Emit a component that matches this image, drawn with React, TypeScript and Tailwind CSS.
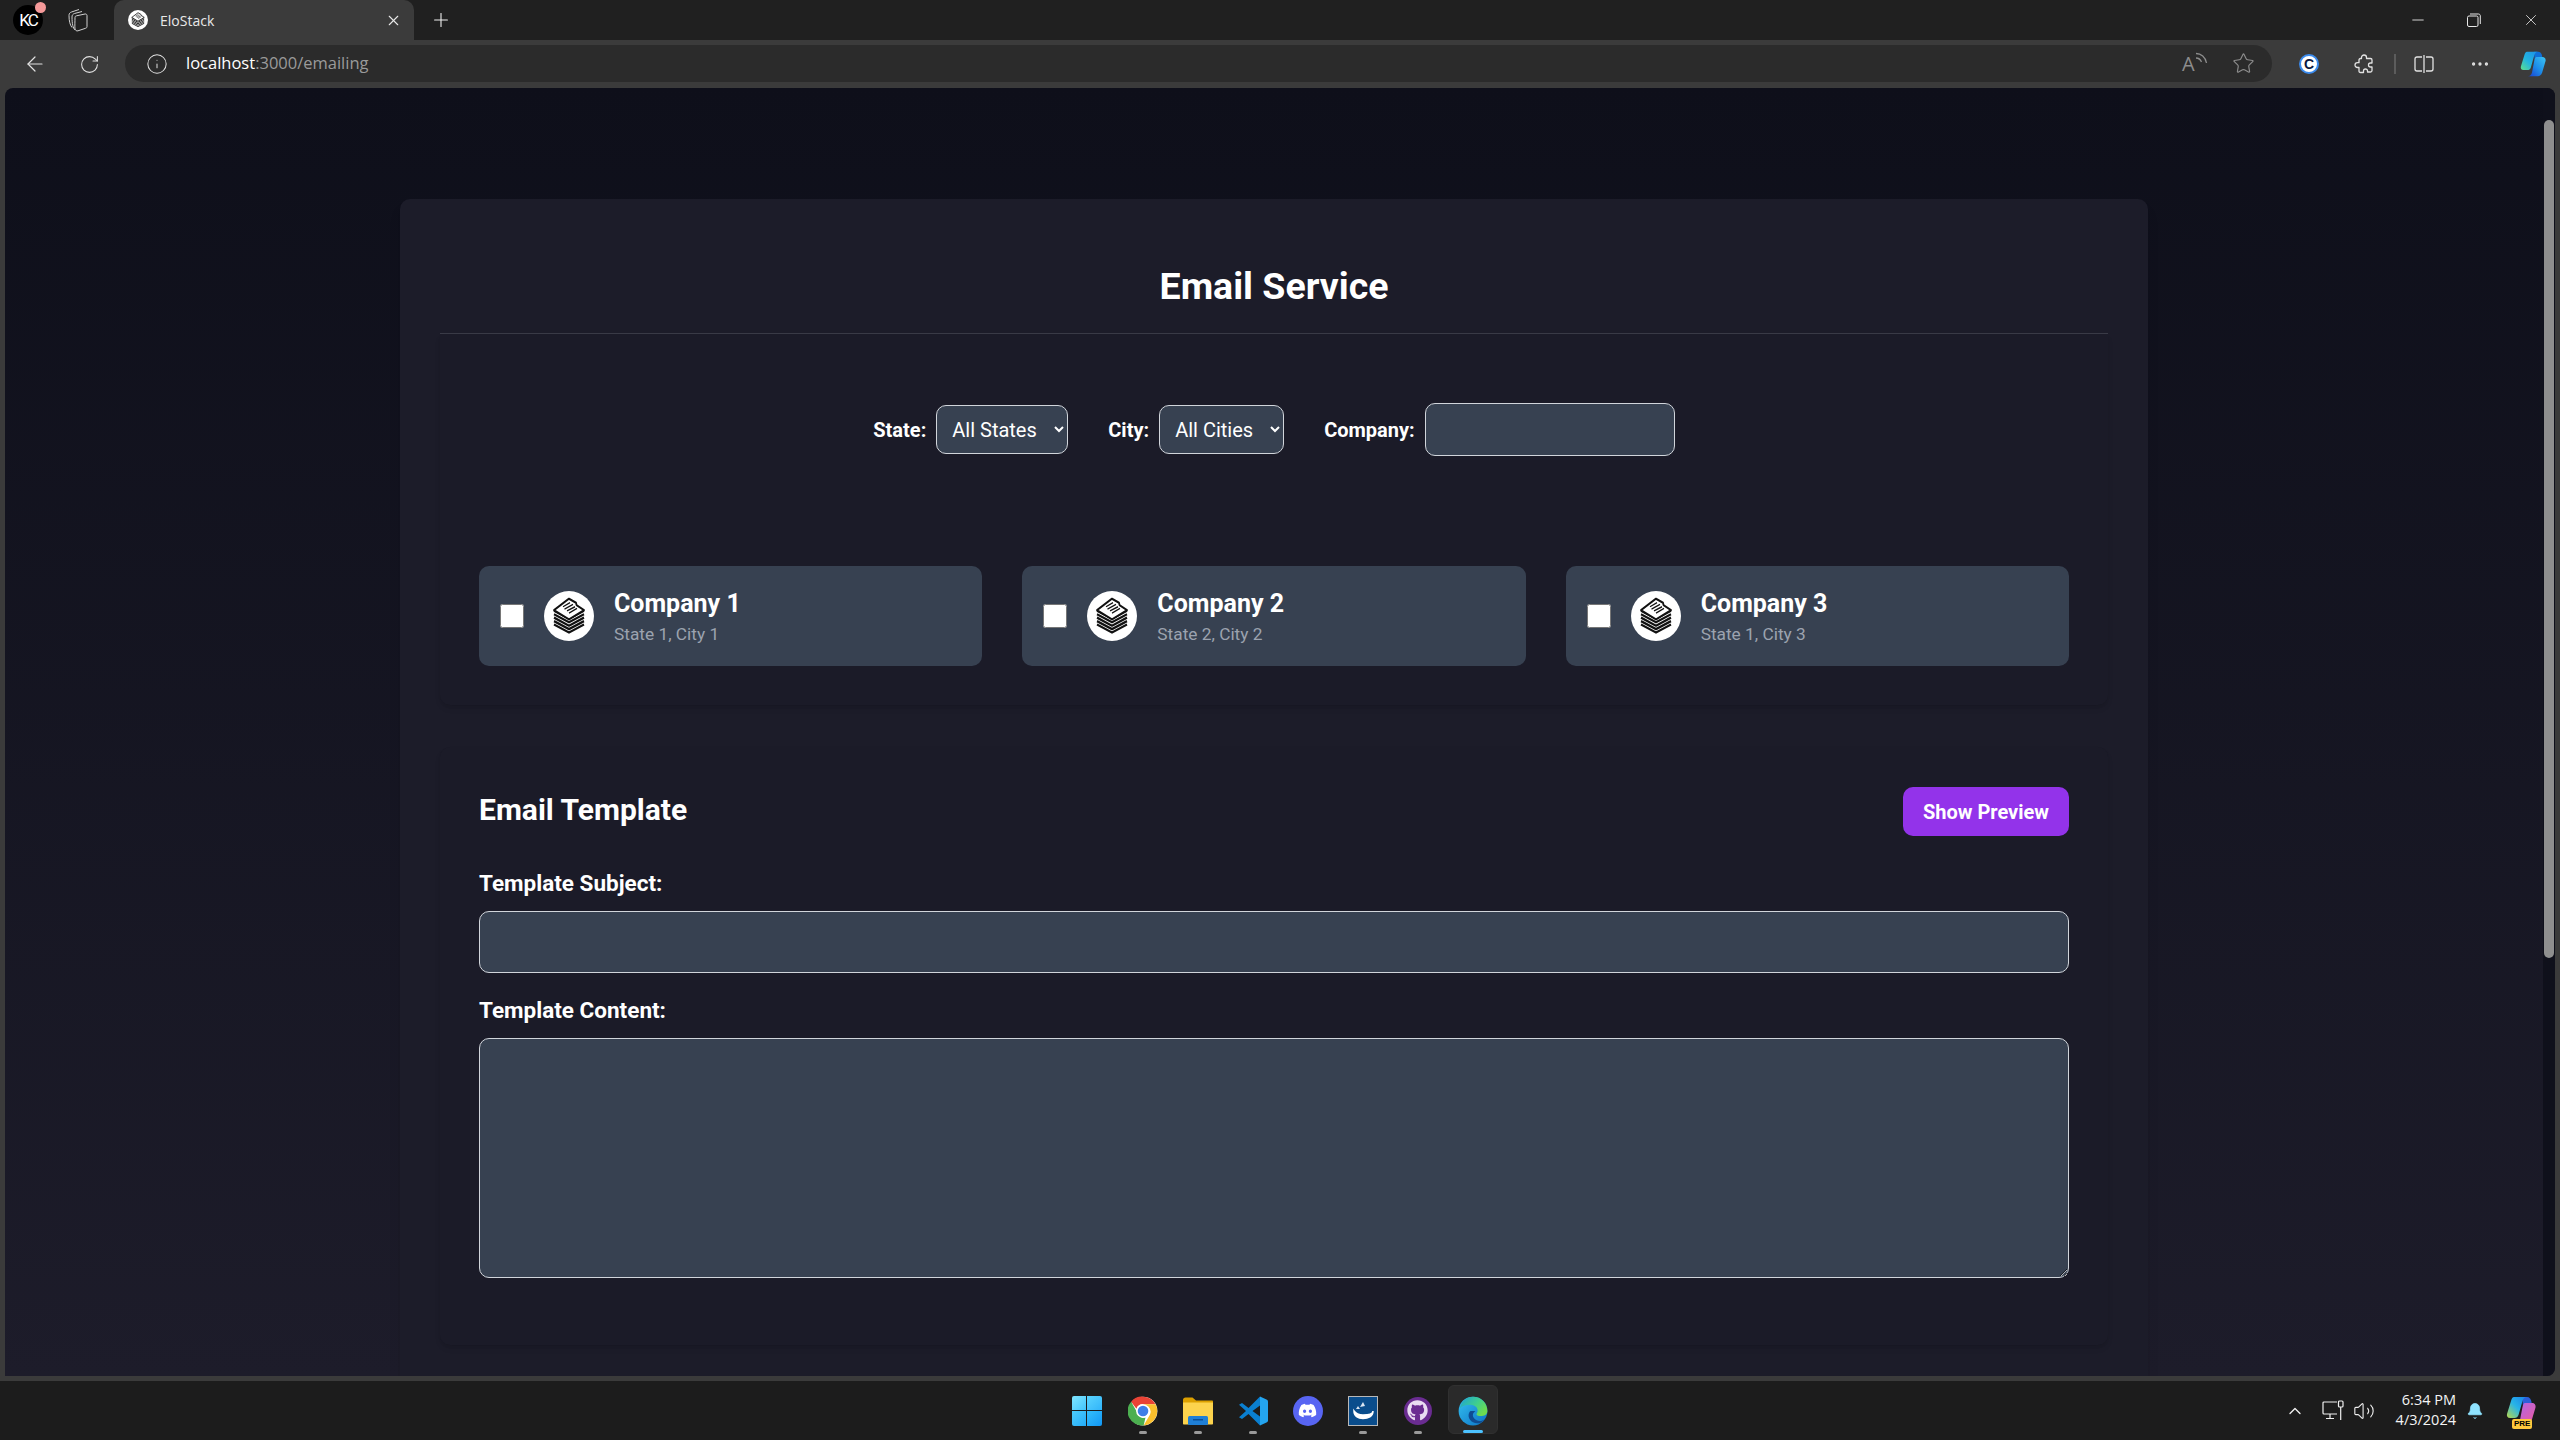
import React from "react";
import { ArrowLeft, RotateCw, Info, X, Plus, Star, Minus, ChevronUp, Volume2, Bell, MoreHorizontal } from "lucide-react";
import { FaDiscord, FaGithub } from "react-icons/fa";

const StackLogo = ({ w = 34, h = 39 }: { w?: number; h?: number }) => (
  <svg width={w} height={h} viewBox="0 0 34 34" preserveAspectRatio="none" fill="none" stroke="#111" strokeLinejoin="round">
    {[27, 24, 21, 18, 15].map((y) => (
      <path key={y} d={`M2 ${y - 3}L17 ${y + 4}L32 ${y - 3}`} strokeWidth="2" />
    ))}
    <path d="M17 1.5L24 5L24.5 7L32 11.5L17 19.5L2 11.5Z" fill="#fff" strokeWidth="1.8" />
    <path d="M11 8.5L18 5M12.5 10.5L21 6.5M15 12L23 8.5M17 14L25 10" strokeWidth="1.2" />
  </svg>
);

const Collections = () => (
  <svg width="22" height="24" viewBox="0 0 22 24" fill="none" stroke="#d0d0d0" strokeWidth="1">
    <path d="M9 9.500C9 8.500 9.500 8 10.500 7.800L19 6C20.200 5.800 21 6.500 21 7.500V18.500C21 19.500 20.500 20 19.500 20.300L12 22.800C10.500 23.300 9.500 22.500 9 21C8.700 19 9 13 9 9.500Z" />
    <path d="M9 22C7 20 6 16 6 9C6 7 7 6 8.500 5.500L16 3.500" />
    <path d="M6 19.500C4 17 3 13 3 7.500C3 5.500 4 4.500 5.500 4L13 1.500" />
  </svg>
);

const RestoreIcon = () => (
  <svg width="14" height="14" viewBox="0 0 14 14" fill="none" stroke="#e8e8e8" strokeWidth="1">
    <rect x="0.500" y="3" width="10.500" height="10.500" rx="1.500" />
    <path d="M3 1H11.500C12.500 1 13.300 1.800 13.300 2.800V11" />
  </svg>
);

const ReadAloud = () => (
  <div className="w-[24px] h-[24px] relative text-[#8d8d8d]">
    <span className="absolute left-0 top-[0px] text-[20px] leading-[24px] font-['Open_Sans',sans-serif]">A</span>
    <svg className="absolute right-[-3px] top-[-1px]" width="16" height="16" viewBox="0 0 16 16" fill="none" stroke="#8d8d8d" strokeWidth="1.300">
      <path d="M3 7C5.500 7 7.500 8.500 8.500 11M3 2.500C8 2.500 12.500 6 13.500 12" />
    </svg>
  </div>
);

const CExtension = () => (
  <div className="w-[20px] h-[20px] rounded-full bg-white border-[2px] border-[#3b8bee] flex items-center justify-center">
    <span className="text-[#0b1740] text-[14px] leading-none font-bold font-['Liberation_Sans',sans-serif]">C</span>
  </div>
);

const PuzzleIcon = () => (
  <svg width="20" height="20" viewBox="0 0 20 20" fill="none" stroke="#e2e2e2" strokeWidth="1.300" strokeLinejoin="round">
    <path d="M7.500 3.500C7.500 2 8.700 1 10 1C11.300 1 12.500 2 12.500 3.500V4.500H16.500C17.500 4.500 18 5 18 6V9H16.500C15 9 14.500 10 14.500 11C14.500 12 15 13 16.500 13H18V16.500C18 17.500 17.500 18 16.500 18H13.500V17C13.500 15.800 12.500 15 11.500 15C10.500 15 9.500 15.800 9.500 17V18.500H6.500C5.500 18.500 5 18 5 17V13.500H3.500C2 13.500 1 12.500 1 11C1 9.700 2 8.700 3.500 8.700H5V6C5 5 5.500 4.500 6.500 4.500H7.500Z" />
  </svg>
);

const SplitIcon = () => (
  <svg width="20" height="20" viewBox="0 0 20 20" fill="none" stroke="#e2e2e2" strokeWidth="1.300">
    <path d="M8 3H3C1.800 3 1 3.800 1 5V15C1 16.200 1.800 17 3 17H8" />
    <path d="M12 3H17C18.200 3 19 3.800 19 5V15C19 16.200 18.200 17 17 17H12" />
    <path d="M10 1V19" />
  </svg>
);

const CopilotShapes = ({ a, b, c }: { a: string; b: string; c: string }) => (
  <>
    <path d="M16 1H21C23.500 1 25 3 25.500 6L26 10H17Z" fill={c} />
    <path d="M8 1H21C18.500 1 17 3 16.500 5L12.500 19C11.800 21 10.500 22 8.500 22H4C1.500 22 0.500 20 1 18L5 5C5.800 2.500 6.500 1 8 1Z" fill={a} />
    <path d="M19 7H26C28.500 7 30 9 29.500 11.500L25.500 25C24.500 27.500 23 29 20.500 29H9C11.500 29 13 27.500 13.800 25L16.500 11C17 8.500 17.800 7 19 7Z" fill={b} />
  </>
);

const Copilot = () => (
  <svg width="30" height="30" viewBox="0 0 30 30">
    <defs>
      <linearGradient id="cpa" x1="0" y1="1" x2="1" y2="0">
        <stop offset="0" stopColor="#5fe08a" />
        <stop offset="0.450" stopColor="#22b4e0" />
        <stop offset="1" stopColor="#1d8fe8" />
      </linearGradient>
      <linearGradient id="cpb" x1="0" y1="1" x2="1" y2="0">
        <stop offset="0" stopColor="#1a3fd0" />
        <stop offset="0.500" stopColor="#1d8ee8" />
        <stop offset="1" stopColor="#3cc4f4" />
      </linearGradient>
    </defs>
    <CopilotShapes a="url(#cpa)" b="url(#cpb)" c="#0f6fd8" />
  </svg>
);

const TrayCopilot = () => (
  <svg width="30" height="30" viewBox="0 0 30 30">
    <defs>
      <linearGradient id="tc1" x1="0" y1="1" x2="1" y2="0">
        <stop offset="0" stopColor="#b8d84a" />
        <stop offset="0.500" stopColor="#28b4e8" />
        <stop offset="1" stopColor="#1a80e8" />
      </linearGradient>
      <linearGradient id="tc2" x1="0" y1="0" x2="1" y2="1">
        <stop offset="0" stopColor="#a868f0" />
        <stop offset="1" stopColor="#f05a9a" />
      </linearGradient>
    </defs>
    <CopilotShapes a="url(#tc1)" b="url(#tc2)" c="#2c5fd8" />
  </svg>
);

const WindowsIcon = () => (
  <div className="grid grid-cols-2 gap-[1px] w-[30px] h-[30px] mr-[2px]">
    <div className="bg-gradient-to-br from-[#7fe6ff] to-[#3fc4fb] rounded-tl-[2px]" />
    <div className="bg-gradient-to-br from-[#5ad4fd] to-[#2fb4fa] rounded-tr-[2px]" />
    <div className="bg-gradient-to-br from-[#4ccdfc] to-[#22acf8] rounded-bl-[2px]" />
    <div className="bg-gradient-to-br from-[#34bffb] to-[#1197f5] rounded-br-[2px]" />
  </div>
);

const ChromeIcon = () => (
  <svg width="30" height="30" viewBox="0 0 48 48">
    <circle cx="24" cy="24" r="23" fill="#fff" />
    <path d="M24 1A23 23 0 0 1 44 13H24A11 11 0 0 0 13.500 20.500L5 9A23 23 0 0 1 24 1Z" fill="#ea4335" />
    <path d="M44 13A23 23 0 0 1 25 47L35 30A11 11 0 0 0 33.500 18L24 13Z" fill="#fbc02d" />
    <path d="M25 47A23 23 0 0 1 5 9L14.500 26A11 11 0 0 0 28 34.500Z" fill="#4caf50" />
    <circle cx="24" cy="24" r="11" fill="#fff" />
    <circle cx="24" cy="24" r="8.500" fill="#3f7ee8" />
  </svg>
);

const FolderIcon = () => (
  <svg width="30" height="28" viewBox="0 0 30 28">
    <path d="M0 3C0 1.500 1 0.500 2.500 0.500H9.500L13 3.500H29C29.600 3.500 30 4 30 4.500V8H0Z" fill="#dca000" />
    <path d="M0 5.500H30V26.500C30 27.300 29.500 27.500 29 27.500H1C0.400 27.500 0 27.200 0 26.500Z" fill="#fcd34d" />
    <rect x="5" y="19" width="20" height="9" rx="1.500" fill="#1f7fd6" />
    <rect x="10" y="22" width="10" height="1.500" fill="#0b4f96" />
  </svg>
);

const VsCodeIcon = () => (
  <svg width="30" height="30" viewBox="0 0 30 30">
    <path d="M22 0.500L29 3.800C29.600 4.100 30 4.700 30 5.400V24.600C30 25.300 29.600 25.900 29 26.200L22 29.500L22 20.500L22 9.500Z" fill="#24a5ef" />
    <path d="M22 0.500L10.500 12L4 7L1 8.800L8 15L1 21.200L4 23L10.500 18L22 29.500V20.500L14.500 15L22 9.500Z" fill="#0a7fd0" />
  </svg>
);

const EdgeIcon = () => (
  <svg width="30" height="30" viewBox="0 0 48 48">
    <defs>
      <linearGradient id="eg1" x1="0" y1="0" x2="1" y2="1">
        <stop offset="0" stopColor="#35c1f1" />
        <stop offset="1" stopColor="#0b72c4" />
      </linearGradient>
      <linearGradient id="eg2" x1="0" y1="0" x2="1" y2="0.600">
        <stop offset="0" stopColor="#1ba0d8" />
        <stop offset="0.600" stopColor="#3fce8e" />
        <stop offset="1" stopColor="#6ddc4f" />
      </linearGradient>
    </defs>
    <circle cx="24" cy="24" r="23" fill="url(#eg1)" />
    <path d="M3 20C5 8 14 1 24 1C37 1 47 11 47 24C47 30 42 32 36 32C30 32 28 30 31 26C33 20 28 14 20 14C12 14 6 16 3 20Z" fill="url(#eg2)" />
    <path d="M20 24C15 28 16 38 24 42C30 45 38 44 43 37C38 41 30 41 26 36C22 31 24 27 28 24Z" fill="#0f4c92" />
  </svg>
);

const AppIcon = () => (
  <div className="w-[30px] h-[30px] border border-[#b8b8b8] bg-[#0a4d8c] flex items-center justify-center">
    <svg width="24" height="22" viewBox="0 0 24 22" fill="none">
      <path d="M3 11C3 16 7 18.500 12 18.500C17 18.500 22 16.500 22 11C22 14 17 15 12 15C8 15 5 14 3 11Z" fill="#fff" stroke="#fff" strokeWidth="1.500" />
      <path d="M12 2L9 7L14 6ZM7 6L5 9L9 9Z" fill="#dbe6f2" />
    </svg>
  </div>
);

const TaskSlot = ({ children, dot, active }: { children: React.ReactNode; dot?: boolean; active?: boolean }) => (
  <div className="w-[55px] h-[59px] flex items-center justify-center relative">
    {active && <div className="absolute left-[2.500px] top-[4px] w-[50px] h-[49px] rounded-[6px] bg-[#2a2a2a] border border-[#303030]" />}
    <div className="relative">{children}</div>
    {dot && <div className="absolute bottom-[6px] left-[23.500px] w-[8px] h-[3px] rounded-full bg-[#9a9a9a]" />}
    {active && <div className="absolute bottom-[7px] left-[17.500px] w-[20px] h-[3px] rounded-full bg-[#4cc2ff]" />}
  </div>
);

const companies = [
  { name: "Company 1", loc: "State 1, City 1" },
  { name: "Company 2", loc: "State 2, City 2" },
  { name: "Company 3", loc: "State 1, City 3" },
];

export default function App() {
  return (
    <div className="w-[2560px] h-[1440px] overflow-hidden flex flex-col bg-[#3b3b3b] font-['Roboto',sans-serif] text-white">
      {/* Tab strip */}
      <div className="h-[40px] shrink-0 bg-[#202020] flex items-center">
        <div className="w-[56px] h-full flex items-center justify-center">
          <div className="relative w-[30px] h-[30px] rounded-full bg-black flex items-center justify-center">
            <span className="text-[17px] font-normal leading-none tracking-[-2px] font-['Roboto',sans-serif]">KC</span>
            <div className="absolute right-[-3px] top-[-3px] w-[11px] h-[11px] rounded-full bg-[#f59a9a]" />
          </div>
        </div>
        <div className="w-[42px] h-full flex items-center justify-center"><Collections /></div>
        <div className="w-[16px]" />
        <div className="w-[300px] h-full bg-[#3b3b3b] rounded-t-[10px] flex items-center pl-[14px] pr-[12px]">
          <div className="w-[20px] h-[20px] rounded-full bg-white flex items-center justify-center"><StackLogo w={14} h={16} /></div>
          <span className="ml-[12px] flex-1 text-[14px] text-[#e8e8e8] font-['Open_Sans',sans-serif]">EloStack</span>
          <X size={17} strokeWidth={1.5} className="text-[#e8e8e8]" />
        </div>
        <div className="w-[54px] h-full flex items-center justify-center"><Plus size={22} strokeWidth={1.2} className="text-[#f0f0f0]" /></div>
        <div className="flex-1" />
        <div className="w-[56px] h-full flex items-center justify-center"><Minus size={18} strokeWidth={1.2} className="text-[#e8e8e8]" /></div>
        <div className="w-[56px] h-full flex items-center justify-center"><RestoreIcon /></div>
        <div className="w-[58px] h-full flex items-center justify-center"><X size={18} strokeWidth={1.1} className="text-[#e8e8e8]" /></div>
      </div>

      {/* Toolbar */}
      <div className="h-[48px] shrink-0 flex items-center pl-[7px]">
        <div className="w-[55px] flex justify-center"><ArrowLeft size={24} strokeWidth={1.2} className="text-[#e2e2e2]" /></div>
        <div className="w-[55px] flex justify-center"><RotateCw size={21} strokeWidth={1.2} className="text-[#e2e2e2]" /></div>
        <div className="ml-[8px] w-[2147px] h-[37px] mb-[1px] rounded-full bg-[#2b2b2b] flex items-center pl-[21px] pr-[17px]">
          <Info size={22} strokeWidth={1.1} className="text-[#e2e2e2]" />
          <span className="ml-[18px] text-[16.500px] font-['Open_Sans',sans-serif]">
            <span className="text-white">localhost</span>
            <span className="text-[#9a9a9a]">:3000/emailing</span>
          </span>
          <div className="flex-1" />
          <ReadAloud />
          <div className="ml-[26px]"><Star size={23} strokeWidth={1.2} className="text-[#8d8d8d]" /></div>
        </div>
        <div className="w-[74px] flex justify-center"><CExtension /></div>
        <div className="w-[36px] flex justify-center"><PuzzleIcon /></div>
        <div className="w-[26px] flex justify-center"><div className="w-[2px] h-[20px] bg-[#5c5c5c]" /></div>
        <div className="w-[32px] flex justify-center"><SplitIcon /></div>
        <div className="w-[80px] flex justify-center"><MoreHorizontal size={22} strokeWidth={1.600} className="text-[#e2e2e2]" /></div>
        <div className="w-[26px] flex justify-center"><Copilot /></div>
      </div>

      {/* Page viewport */}
      <div className="h-[1288px] shrink-0 ml-[5px] mr-[5px] rounded-t-[8px] rounded-br-[8px] overflow-hidden relative bg-gradient-to-b from-[#0e0f1a] to-[#1d1c2a]">
        <div className="absolute right-0 top-0 bottom-0 w-[12px] bg-[#0f101b]">
          <div className="absolute left-[1px] top-[32px] w-[10px] h-[838px] rounded-full bg-[#8f8f8f]" />
        </div>
        <div className="ml-[395px] w-[1748px] mt-[111px] rounded-t-[10px] bg-[#1c1c29] shadow-lg px-10 pt-[67px] h-[1300px]">
          <h1 className="text-center text-[37.500px] leading-[40px] font-bold pb-[27px] border-b border-[#3a3b47]">Email Service</h1>

          <div className="rounded-b-[10px] shadow-md bg-[#1b1b28] px-[39px] pt-[69px] pb-[39px]">
            <div className="flex items-center justify-center h-[53px] font-bold text-[20px]">
              <label className="mr-[10px]">State:</label>
              <select className="w-[132px] h-[49px] rounded-[10px] bg-[#374151] border border-[#d1d5db] pl-[11px] text-[20px] font-normal text-white">
                <option>All States</option>
              </select>
              <label className="ml-[40px] mr-[10px]">City:</label>
              <select className="w-[125px] h-[49px] rounded-[10px] bg-[#374151] border border-[#d1d5db] pl-[11px] text-[20px] font-normal text-white">
                <option>All Cities</option>
              </select>
              <label className="ml-[40px] mr-[10px]">Company:</label>
              <input className="w-[250px] h-[53px] rounded-[10px] bg-[#374151] border border-[#d1d5db]" />
            </div>

            <div className="mt-[110px] grid grid-cols-3 gap-[40px]">
              {companies.map((c) => (
                <div key={c.name} className="h-[100px] rounded-[10px] bg-[#374151] flex items-center pl-[21px]">
                  <input type="checkbox" className="w-[24px] h-[24px] m-0" />
                  <div className="ml-[20px] w-[50px] h-[50px] rounded-full bg-white flex items-center justify-center">
                    <StackLogo />
                  </div>
                  <div className="ml-[20px] mt-[2px]">
                    <div className="text-[25px] leading-[32px] font-bold">{c.name}</div>
                    <div className="mt-[2px] text-[17.300px] leading-[24px] text-[#9ca3af]">{c.loc}</div>
                  </div>
                </div>
              ))}
            </div>
          </div>

          <div className="mt-[42px] rounded-[10px] shadow-md bg-[#1b1b28] px-[39px] pt-[40px] pb-[67px]">
            <div className="flex items-center justify-between h-[49px]">
              <h2 className="text-[30px] leading-[36px] font-bold mb-[3px]">Email Template</h2>
              <button className="w-[166px] h-[49px] rounded-[10px] bg-[#9333ea] text-[20px] font-bold text-white">Show Preview</button>
            </div>
            <label className="block mt-[33px] text-[22.500px] leading-[28px] font-bold">Template Subject:</label>
            <input className="block w-full mt-[14px] h-[62px] rounded-[10px] bg-[#374151] border border-[#d1d5db]" />
            <label className="block mt-[23px] text-[22.500px] leading-[28px] font-bold">Template Content:</label>
            <textarea className="block w-full mt-[14px] h-[240px] rounded-[10px] bg-[#374151] border border-[#d1d5db]" />
          </div>
        </div>
      </div>

      {/* Gap strip + Taskbar */}
      <div className="h-[5px] shrink-0" />
      <div className="h-[59px] shrink-0 bg-[#1c1c1c] grid grid-cols-[1fr_auto_1fr] items-center">
        <div />
        <div className="flex">
          <TaskSlot><WindowsIcon /></TaskSlot>
          <TaskSlot dot><ChromeIcon /></TaskSlot>
          <TaskSlot dot><FolderIcon /></TaskSlot>
          <TaskSlot dot><VsCodeIcon /></TaskSlot>
          <TaskSlot>
            <div className="w-[30px] h-[30px] rounded-full bg-[#5865f2] flex items-center justify-center"><FaDiscord size={19} className="text-white" /></div>
          </TaskSlot>
          <TaskSlot dot><AppIcon /></TaskSlot>
          <TaskSlot dot>
            <div className="w-[28px] h-[28px] rounded-full bg-[#6a2c91] flex items-center justify-center"><FaGithub size={21} className="text-[#e9dcf2]" /></div>
          </TaskSlot>
          <TaskSlot active><EdgeIcon /></TaskSlot>
        </div>
        <div className="flex items-center justify-end h-full pr-[24px]">
          <ChevronUp size={20} strokeWidth={1.600} className="text-[#f0f0f0]" />
          <div className="ml-[17px]">
            <svg width="22" height="22" viewBox="0 0 22 22" fill="none" stroke="#f0f0f0" strokeWidth="1.200">
              <path d="M15 14H2C1.400 14 1 13.600 1 13V3C1 2.400 1.400 2 2 2H15" />
              <path d="M8 14V18M4 18.500H12" />
              <rect x="16.500" y="1" width="4.500" height="6" rx="1" />
              <path d="M18.700 7V20" />
            </svg>
          </div>
          <Volume2 size={22} strokeWidth={1.200} className="ml-[9px] text-[#f0f0f0]" />
          <div className="ml-[11px] mb-[2px] w-[70px] text-right text-[14.500px] leading-[20px] text-[#f4f4f4] font-['Open_Sans',sans-serif]">
            <div>6:34 PM</div>
            <div>4/3/2024</div>
          </div>
          <Bell size={18} fill="#8fe3ff" strokeWidth={1} className="ml-[10px] text-[#8fe3ff]" />
          <div className="ml-[22px] relative">
            <TrayCopilot />
            <span className="absolute left-[6px] bottom-[-3px] px-[2px] bg-[#ffc83d] rounded-[2px] text-[8px] leading-[10px] font-bold text-black font-['Liberation_Sans',sans-serif]">PRE</span>
          </div>
        </div>
      </div>
    </div>
  );
}
